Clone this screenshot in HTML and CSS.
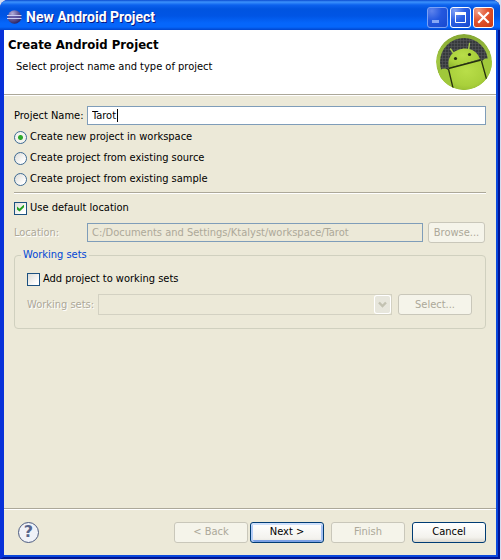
FILE: index.html
```html
<!DOCTYPE html>
<html lang="en">
<head>
<meta charset="utf-8">
<meta name="viewport" content="width=device-width, initial-scale=1">
<title>New Android Project</title>
<link rel="stylesheet" href="styles.css">
</head>
<body>
<div class="window">
  <header class="titlebar">
    <svg class="app-icon" viewBox="0 0 16 16" aria-hidden="true">
      <defs>
        <radialGradient id="orb" cx=".35" cy=".25" r=".8">
          <stop offset="0" stop-color="#b4aed8"/>
          <stop offset=".5" stop-color="#665e9e"/>
          <stop offset="1" stop-color="#281f5c"/>
        </radialGradient>
      </defs>
      <circle cx="7.500" cy="8" r="6.800" fill="url(#orb)"/>
      <path d="M0 6.500h14.500M0 9.500h14.500" stroke="#c9cdf2" stroke-width="1"/>
      <path d="M1 8h13" stroke="#5850a0" stroke-width="1.400"/>
    </svg>
    <h1 class="title">New Android Project</h1>
    <div class="controls">
      <button class="control minimize" type="button" aria-label="Minimize">
        <svg viewBox="0 0 19 19"><path d="M4 13.500h7" stroke="#86a7f6" stroke-width="3"/></svg>
      </button>
      <button class="control" type="button" aria-label="Maximize">
        <svg viewBox="0 0 19 19"><path d="M4.500 5h10v9.500h-10z" fill="none" stroke="#fff" stroke-width="1"/><path d="M4 5.500h11" stroke="#fff" stroke-width="3"/></svg>
      </button>
      <button class="control close" type="button" aria-label="Close">
        <svg viewBox="0 0 19 19"><path d="M5 5l9 9M14 5l-9 9" stroke="#fff" stroke-width="2.200" stroke-linecap="square"/></svg>
      </button>
    </div>
  </header>

  <section class="banner">
    <div class="banner-text">
      <h2 class="heading">Create Android Project</h2>
      <p class="description">Select project name and type of project</p>
    </div>
    <svg class="logo" viewBox="0 0 56 56" aria-hidden="true">
      <defs>
        <pattern id="mesh" width="3" height="3" patternUnits="userSpaceOnUse">
          <rect width="3" height="3" fill="#36393c"/>
          <path d="M0 .5h3M.5 0v3" stroke="#55585b" stroke-width=".6"/>
        </pattern>
        <radialGradient id="robot" cx=".45" cy=".35" r=".75">
          <stop offset="0" stop-color="#b9de49"/>
          <stop offset=".6" stop-color="#a9d03b"/>
          <stop offset="1" stop-color="#8ab12c"/>
        </radialGradient>
        <linearGradient id="ring" x1="0" y1="0" x2="0" y2="1">
          <stop offset="0" stop-color="#86a834"/>
          <stop offset=".5" stop-color="#a3c843"/>
          <stop offset="1" stop-color="#7c9f28"/>
        </linearGradient>
        <clipPath id="disc"><circle cx="28" cy="28" r="28"/></clipPath>
      </defs>
      <g clip-path="url(#disc)">
        <circle cx="28" cy="28" r="28" fill="url(#ring)"/>
        <circle cx="28" cy="28" r="24" fill="url(#mesh)"/>
        <path d="M14.500 15l4 5.500M33.500 9.500l-1 6.500" stroke="#a9cd49" stroke-width="1.400" stroke-linecap="round"/>
        <path d="M13 34C11 26 14 19 22 16C31 12 41 16 44 25z" fill="url(#robot)"/>
        <path d="M12 34.500L45 25.500L53 50L44 58H16z" fill="url(#robot)"/>
        <path d="M3 38c2-4 8-5 10 0l5 20H4zM46 30c-1-5 5-7 9-4l4 16-8 10z" fill="#a0c83a"/>
        <path d="M12.500 34.500L45 26M12.500 35l4.500 19M45.500 27l5 18" fill="none" stroke="#26300f" stroke-width="1.300"/>
        <circle cx="19.500" cy="24.500" r="1.600" fill="#26300f"/>
        <circle cx="33.500" cy="20.500" r="1.600" fill="#26300f"/>
      </g>
    </svg>
  </section>

  <form class="form" id="project">
    <div class="row name-row">
      <label class="row-label" for="name">Project Name:</label>
      <div class="text-box">
        <input class="text" id="name" type="text" value="Tarot">
        <span class="caret-line" aria-hidden="true"><span class="caret-space">Tarot</span></span>
      </div>
    </div>
    <label class="option"><input class="radio" type="radio" name="source" checked>Create new project in workspace</label>
    <label class="option"><input class="radio" type="radio" name="source">Create project from existing source</label>
    <label class="option"><input class="radio" type="radio" name="source">Create project from existing sample</label>
    <hr class="rule">
    <label class="option"><input class="check" type="checkbox" checked>Use default location</label>
    <div class="row location-row">
      <label class="row-label disabled" for="location">Location:</label>
      <input class="text" id="location" type="text" value="C:/Documents and Settings/Ktalyst/workspace/Tarot" disabled>
      <button class="button browse" type="button" disabled>Browse...</button>
    </div>
    <fieldset class="group">
      <legend>Working sets</legend>
      <label class="option"><input class="check" type="checkbox">Add project to working sets</label>
      <div class="sets-row">
        <label class="disabled" for="sets">Working sets:</label>
        <div class="combo">
          <select id="sets" disabled><option></option></select>
          <svg class="combo-arrow" viewBox="0 0 15 17" aria-hidden="true"><path d="M4 6.500l3.500 3.500 3.500-3.500" fill="none" stroke="#c3c2b2" stroke-width="2.400"/></svg>
        </div>
        <button class="button" type="button" disabled>Select...</button>
      </div>
    </fieldset>
  </form>

  <footer class="footer">
    <button class="help" type="button" aria-label="Help">?</button>
    <div class="actions">
      <div class="pager">
        <button class="button" type="button" disabled>&lt; Back</button>
        <button class="button primary" type="submit" form="project">Next &gt;</button>
      </div>
      <button class="button" type="button" disabled>Finish</button>
      <button class="button" type="button">Cancel</button>
    </div>
  </footer>
</div>
</body>
</html>
```
FILE: styles.css
```css
:root {
  --face: #ece9d8;
  --ink: #000;
  --muted: #aca899;
  --faint: #c9c7ba;
  --field: #7f9db9;
  --navy: #003c74;
}

* {
  box-sizing: border-box;
}

body {
  margin: 0;
  background: #d5dcf0;
  color: var(--ink);
  font: 11px/14px "DejaVu Sans Condensed", "DejaVu Sans", Tahoma, sans-serif;
}

button,
input,
select {
  font: inherit;
  color: inherit;
}

h1,
h2,
p {
  margin: 0;
}

.window {
  display: flex;
  flex-direction: column;
  min-height: calc(100vh - 1px);
  margin: 0 1px 1px 0;
  padding: 0 2px 2px 0;
  border: solid;
  border-width: 0 2px 2px 4px;
  border-color: #0831d9 #001493 #001493 #0831d9;
  border-radius: 8px 8px 0 0;
  background: #0a48dc;
}

/* Title bar */

.titlebar {
  display: flex;
  align-items: center;
  height: 30px;
  margin: 0 -4px;
  padding: 4px 6px 0 7px;
  border-radius: 8px 8px 0 0;
  background: linear-gradient(#0a4bd0 0, #3c92fc 2px, #0c62ee 5px, #0054e0 9px, #0055e5 16px, #0566fb 23px, #0566fb 27px, #0045cd 30px);
}

.app-icon {
  width: 16px;
  height: 16px;
}

.title {
  flex: 1;
  margin-left: 3px;
  color: #fff;
  font: bold 14px/18px Roboto, sans-serif;
  text-shadow: 1px 1px #0a1883;
}

.controls {
  display: flex;
  gap: 2px;
}

.control {
  width: 21px;
  height: 21px;
  padding: 0;
  border: 1px solid #fff;
  border-radius: 3px;
  background: radial-gradient(circle at 20% 15%, #7f9ff4, #2c60e4 45%, #1646cc);
}

.control svg {
  display: block;
}

.control.minimize {
  border-color: #7ca2f5;
  background: radial-gradient(circle at 20% 15%, #5e83ec, #2458df 45%, #1749cf);
}

.control.close {
  background: radial-gradient(circle at 20% 15%, #f0a088, #e2532f 45%, #c93a12);
}

/* Banner */

.banner {
  display: flex;
  justify-content: space-between;
  height: 65px;
  padding: 4px 4px 0;
  border-bottom: 1px solid var(--muted);
  background: #fff;
}

.heading {
  margin-top: 2px;
  font-size: 13px;
  line-height: 18px;
}

.description {
  margin: 6px 0 0 8px;
}

.logo {
  width: 56px;
  height: 56px;
}

/* Form */

.form {
  flex: 1;
  padding: 10px 10px 0;
  border-top: 1px solid #fff;
  background: var(--face);
}

.row {
  display: grid;
  grid-template-columns: 68px 1fr;
  column-gap: 5px;
  align-items: center;
}

.row-label {
  white-space: nowrap;
}

.text-box {
  position: relative;
}

.text {
  display: block;
  width: 100%;
  height: 19px;
  padding: 0 4px;
  border: 1px solid var(--field);
  border-radius: 0;
  outline: 0;
  background: #fff;
}

.text:disabled {
  background: var(--face);
  color: var(--muted);
}

.caret-line {
  position: absolute;
  top: 3px;
  left: 5px;
  pointer-events: none;
}

.caret-space {
  display: block;
  height: 13px;
  padding-right: 1px;
  border-right: 1px solid #000;
  color: transparent;
}

.name-row {
  margin-bottom: 4px;
}

.option {
  display: flex;
  align-items: center;
  gap: 3px;
  width: max-content;
  height: 16px;
  margin-bottom: 5px;
}

.radio,
.check {
  flex: none;
  width: 13px;
  height: 13px;
  margin: 0;
  appearance: none;
  border: 1px solid #1c5180;
  background: linear-gradient(135deg, #dcdcd7, #fff 80%);
}

.radio {
  border-color: #3d6a93;
  border-radius: 50%;
}

.radio:checked {
  background: radial-gradient(circle, #2ba92b 0 2px, #f3f3ef 3px);
}

.check:checked::after {
  content: "";
  display: block;
  width: 7px;
  height: 7px;
  margin: 2px;
  background: #21a121;
  clip-path: polygon(0 30%, 36% 62%, 100% 0, 100% 40%, 36% 100%, 0 70%);
}

.rule {
  height: 2px;
  margin: 0 0 6px;
  border: solid;
  border-width: 1px 0;
  border-color: var(--muted) transparent #fff;
}

.location-row {
  grid-template-columns: 68px 1fr 58px;
  margin-top: 6px;
}

.disabled {
  color: var(--muted);
  text-shadow: 1px 1px #fff;
}

.group {
  min-width: 0;
  margin: 5px 0 0;
  padding: 9px 13px 13px 12px;
  border: 1px solid #d0d0bf;
  border-radius: 4px;
}

.group legend {
  margin-left: -6px;
  padding: 0 2px;
  color: #0046d5;
}

.group .option {
  margin-bottom: 7px;
}

.sets-row {
  display: grid;
  grid-template-columns: 65px 1fr 74px;
  column-gap: 6px;
  align-items: center;
  white-space: nowrap;
}

.combo {
  position: relative;
}

.combo select {
  display: block;
  width: 100%;
  height: 21px;
  appearance: none;
  border: 1px solid var(--faint);
  border-radius: 0;
  background: var(--face);
}

.combo-arrow {
  position: absolute;
  top: 2px;
  right: 2px;
  width: 15px;
  height: 17px;
  border-radius: 2px;
  background: #e7e6dc;
  box-shadow: 0 0 0 1px #fff;
}

/* Buttons */

.button {
  width: 74px;
  height: 21px;
  padding: 0;
  border: 1px solid var(--navy);
  border-radius: 3px;
  background: linear-gradient(#fff, #f3f2ed 75%, #dcd8cf);
}

.button:disabled {
  border-color: var(--faint);
  background: #f5f4ea;
  color: var(--muted);
}

.button.browse {
  width: 57px;
}

.button.primary {
  background: linear-gradient(#fff, #f3f2ee 80%, #e5e4e0);
  box-shadow: inset 0 2px #cee0fc, inset 2px 0 #b4cdf8, inset -2px 0 #a4c0f2, inset 0 -2px #7ba0e4;
}

/* Footer */

.footer {
  display: flex;
  align-items: center;
  justify-content: space-between;
  height: 47px;
  padding: 0 10px 0 14px;
  border-top: 1px solid var(--muted);
  box-shadow: inset 0 1px #fff;
  background: var(--face);
}

.actions {
  display: flex;
  gap: 7px;
}

.pager {
  display: flex;
  gap: 2px;
}

.help {
  width: 21px;
  height: 21px;
  padding: 0;
  border: 1px solid #4c5b80;
  border-radius: 50%;
  background: #f0f2f8;
  color: #56658c;
  font: bold 16px/18px "DejaVu Sans", sans-serif;
}
```
